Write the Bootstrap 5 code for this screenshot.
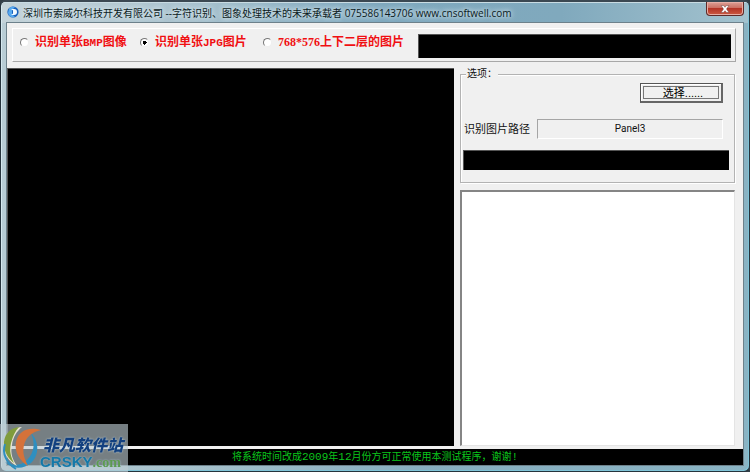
<!DOCTYPE html>
<html lang="zh-CN">
<head>
<meta charset="utf-8">
<meta name="viewport" content="width=device-width, initial-scale=1">
<title>字符识别</title>
<link rel="stylesheet" href="https://cdn.jsdelivr.net/npm/bootstrap@5.3.0/dist/css/bootstrap.min.css">
<style>
body{font-family:"Liberation Sans","Noto Sans CJK SC",sans-serif;font-size:11px;line-height:14px;color:#111;background:#313e46}
.win{padding:0 6px 6px;border:1px solid #26343d;border-top:2px solid #3b4852;border-radius:6px;box-shadow:inset 1px 1px 0 #d5e8ef,inset -1px -1px 0 #7fc4d8;background:linear-gradient(100deg,#b9cdd5 0,#a9c3cd 30%,#86adbe 60%,#8ab4c4 100%)}
.win-title{height:21px;font-family:"Open Sans","Noto Sans CJK SC",sans-serif;font-size:10px;background:linear-gradient(90deg,#c4d3d9 0,#a9c2ce 25%,#7ea8be 50%,#80a9bd 75%,#a3c2ce 100%);margin:0 -5px;padding-left:5px;box-shadow:inset 0 1px 0 #c9dce3}
.win-title h1{font-size:10px;line-height:14px;font-weight:400;color:#0b1a22;text-shadow:0 0 4px #dcebf1,0 0 6px #dcebf1}
.close-btn{width:38px;height:14px;border:1px solid #5f2a28;border-top:0;border-radius:0 0 4px 4px;background:linear-gradient(#dda096 0,#cc6f62 45%,#b53527 50%,#cb5a42 100%);box-shadow:inset 0 0 0 1px #e7aea5}
.client{background:#f0f0f0;outline:1px solid #6d818b}
.modes{margin:5px 7px 6px 5px;height:34px;border:1px solid #fff;border-right-color:#a8a8a8;border-bottom-color:#a8a8a8;padding:5px 4px 3px 7px}
.mode{font-family:"Liberation Serif","Noto Sans CJK SC",serif;font-size:12px;line-height:16px;font-weight:700;color:#f00f12;gap:6px}
.mode .mono{font-family:"Liberation Mono",monospace;font-size:11px}
.mode-a{width:120px}.mode-b{width:123px}.mode-c{width:155px}
.dot{appearance:none;width:9px;height:9px;margin:0;border:1px solid #777;border-right-color:#eee;border-bottom-color:#eee;border-radius:50%;background:#fff}
.dot:checked{background:radial-gradient(circle,#000 0 2px,#fff 2px)}
.screen{background:#000;border-top:1px solid #555;border-left:1px solid #555}
.result{height:24px}
.side{width:40%;max-width:289px;padding:0 8px 0 6px}
.opts{border:1px solid #b3b3b3;box-shadow:inset 1px 1px 0 #fff,1px 1px 0 #fff;height:115px;margin:0 0 7px;padding:0 5px 0 2px}
.opts legend{width:auto;float:none;font-size:10px;line-height:12px;margin:0 0 0 3px;padding:0 1px;background:#f0f0f0}
.pick{width:83px;height:20px;margin:3px 6px 0 0;padding:2px;border:1px solid #555;border-right:2px solid #666;border-bottom:2px solid #666;background:#f0f0f0;box-shadow:inset 1px 1px 0 #fff}
.pick span{border:1px solid #777;line-height:12px;height:13px;padding-left:4px}
.path-row{margin:16px 6px 11px 1px;gap:7px}
.path-box{height:20px;font-family:Roboto,sans-serif;font-size:10px;border:1px solid #a5a5a5;border-right-color:#fff;border-bottom-color:#fff}
.bar{height:20px}
.list-area{resize:none;background:#fff;border:1px solid #e4e4e4;border-top:2px solid #858585;border-left:2px solid #858585;outline:0}
.status{height:16px;margin-top:3px;background:#000;color:#0bc51c;font-size:10px;line-height:16px}
.status b{font-family:"Liberation Mono",monospace;font-size:11px;font-weight:400}
.brand{left:0;bottom:0;width:128px;height:48px;background:rgba(190,205,212,.62)}
.brand svg{left:0;top:0}
.brand-cn{left:43px;top:12px;font-size:16px;line-height:20px;font-weight:900;font-style:italic;color:#12407f;text-shadow:0 0 2px #c3d6e2;white-space:nowrap}
.brand-en{left:40px;top:30px;font-size:15px;line-height:16px;font-weight:700;color:#1478a8;text-shadow:0 0 2px #a9c5d2}
.brand-en small{font-family:"Liberation Serif",serif;font-size:14px;color:#5d9a50}
</style>
<script src="https://cdn.jsdelivr.net/npm/bootstrap@5.3.0/dist/js/bootstrap.bundle.min.js"></script>
</head>
<body>
<div class="win vh-100 d-flex flex-column position-relative overflow-hidden">
  <header class="win-title d-flex align-items-start flex-shrink-0">
    <svg class="mt-1" width="12" height="12" viewBox="0 0 12 12" aria-hidden="true"><circle cx="6" cy="6" r="5.6" fill="#1761bd"/><path d="M2 2.5A5 5 0 0 1 8 1L5 4v4l3 3A5.2 5.2 0 0 1 1 7z" fill="#57a9ee"/><path d="M4 3h3a3 3 0 0 1 0 6H4l2-1.5V4.500z" fill="#f2faff"/></svg>
    <h1 class="m-0 ms-1 mt-1 text-nowrap">深圳市索威尔科技开发有限公司 --字符识别、图象处理技术的未来承载者 075586143706 www.cnsoftwell.com</h1>
    <button type="button" class="close-btn ms-auto me-1 p-0 d-flex justify-content-center align-items-center" aria-label="关闭"><svg width="10" height="8" viewBox="0 0 10 8"><path d="M1 .5h2.500L5 2.300 6.500.5H9L6.500 4 9 7.500H6.500L5 5.700 3.500 7.500H1L3.500 4z" fill="#fff" stroke="#70403f" stroke-width=".5"/></svg></button>
  </header>
  <main class="client flex-grow-1 d-flex flex-column">
    <div class="modes d-flex">
      <label class="mode mode-a d-flex align-items-center align-self-start"><input class="dot" type="radio" name="mode"><span>识别单张<span class="mono">BMP</span>图像</span></label>
      <label class="mode mode-b d-flex align-items-center align-self-start"><input class="dot" type="radio" name="mode" checked><span>识别单张<span class="mono">JPG</span>图片</span></label>
      <label class="mode mode-c d-flex align-items-center align-self-start"><input class="dot" type="radio" name="mode"><span>768*576上下二层的图片</span></label>
      <div class="screen result flex-grow-1"></div>
    </div>
    <div class="d-flex flex-grow-1">
      <div class="screen flex-grow-1"></div>
      <div class="side d-flex flex-column flex-shrink-0">
        <fieldset class="opts d-flex flex-column">
          <legend class="align-self-start">选项：</legend>
          <button type="button" class="pick align-self-end"><span class="d-block">选择......</span></button>
          <div class="path-row d-flex align-items-center"><span>识别图片路径</span><div class="path-box flex-grow-1 d-flex align-items-center justify-content-center">Panel3</div></div>
          <div class="screen bar"></div>
        </fieldset>
        <textarea class="list-area flex-grow-1" aria-label="识别结果"></textarea>
      </div>
    </div>
    <footer class="status text-center">将系统时间改成<b>2009</b>年<b>12</b>月份方可正常使用本测试程序，谢谢<b>!</b></footer>
  </main>
</div>
<div class="brand position-fixed">
  <svg class="position-absolute" width="44" height="48" viewBox="0 0 44 48" aria-hidden="true"><path d="M31 9c8 8 9 22 0 30-8 7-19 6-26-1 8 4 16 4 22-2 8-8 8-18 4-27z" fill="#2f8fc0"/><path d="M22 3C9 4 2 14 4 24c1 9 7 15 13 18-4-6-7-12-5-21 1-8 5-14 10-18z" fill="#e9e5cf"/><path d="M19 3C9 4 3 12 4 22c1 8 5 13 10 17-3-6-5-12-3-20 2-7 4-12 8-16z" fill="#7f9c3c"/><path d="M41 6C27 2 18 8 16 18c-2 10 4 19 12 24-3-7-6-12-4-21 2-8 8-13 17-15z" fill="#d5723a"/><path d="M5 20c-3 9 1 19 11 25" fill="none" stroke="#2f8fc0" stroke-width="2"/></svg>
  <div class="brand-cn position-absolute">非凡软件站</div>
  <div class="brand-en position-absolute">CRSKY<small>.com</small></div>
</div>
</body>
</html>
